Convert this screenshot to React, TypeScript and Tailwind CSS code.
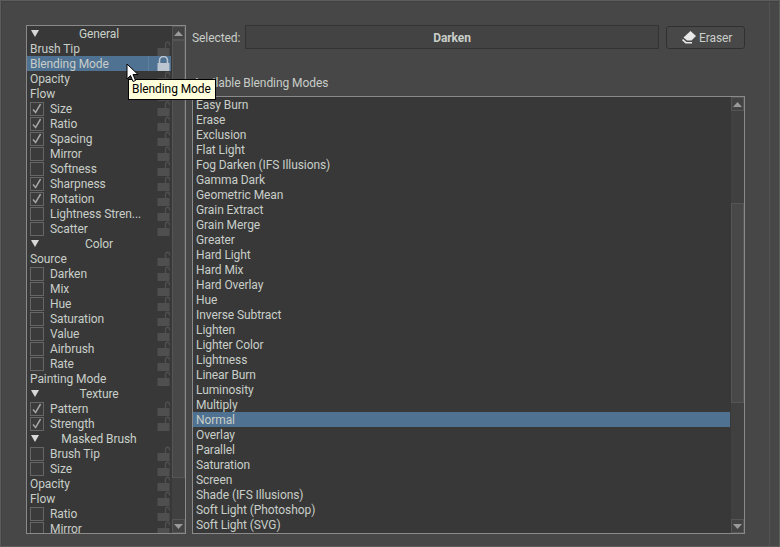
import React from "react";

const font = { fontFamily: 'Roboto, sans-serif' };

type Row =
  | { k: "h"; t: string }
  | { k: "p"; t: string; sel?: boolean }
  | { k: "c"; t: string; on?: boolean };

const rows: Row[] = [
  { k: "h", t: "General" },
  { k: "p", t: "Brush Tip" },
  { k: "p", t: "Blending Mode", sel: true },
  { k: "p", t: "Opacity" },
  { k: "p", t: "Flow" },
  { k: "c", t: "Size", on: true },
  { k: "c", t: "Ratio", on: true },
  { k: "c", t: "Spacing", on: true },
  { k: "c", t: "Mirror" },
  { k: "c", t: "Softness" },
  { k: "c", t: "Sharpness", on: true },
  { k: "c", t: "Rotation", on: true },
  { k: "c", t: "Lightness Stren..." },
  { k: "c", t: "Scatter" },
  { k: "h", t: "Color" },
  { k: "p", t: "Source" },
  { k: "c", t: "Darken" },
  { k: "c", t: "Mix" },
  { k: "c", t: "Hue" },
  { k: "c", t: "Saturation" },
  { k: "c", t: "Value" },
  { k: "c", t: "Airbrush" },
  { k: "c", t: "Rate" },
  { k: "p", t: "Painting Mode" },
  { k: "h", t: "Texture" },
  { k: "c", t: "Pattern", on: true },
  { k: "c", t: "Strength", on: true },
  { k: "h", t: "Masked Brush" },
  { k: "c", t: "Brush Tip" },
  { k: "c", t: "Size" },
  { k: "p", t: "Opacity" },
  { k: "p", t: "Flow" },
  { k: "c", t: "Ratio" },
  { k: "c", t: "Mirror" },
];

const modes = [
  "Easy Burn", "Erase", "Exclusion", "Flat Light", "Fog Darken (IFS Illusions)", "Gamma Dark",
  "Geometric Mean", "Grain Extract", "Grain Merge", "Greater", "Hard Light", "Hard Mix",
  "Hard Overlay", "Hue", "Inverse Subtract", "Lighten", "Lighter Color", "Lightness",
  "Linear Burn", "Luminosity", "Multiply", "Normal", "Overlay", "Parallel", "Saturation",
  "Screen", "Shade (IFS Illusions)", "Soft Light (Photoshop)", "Soft Light (SVG)",
];

function Lock({ bright }: { bright?: boolean }) {
  const c = bright ? "#bcc6d0" : "#4f4f4f";
  return (
    <svg width="13" height="15" viewBox="0 0 13 15" className="block shrink-0">
      <rect x="0.5" y="7" width="12" height="8" fill={c} />
      {bright ? (
        <path d="M2.5 7V4.5a4 4 0 0 1 8 0V7" fill="none" stroke={c} strokeWidth="1.6" />
      ) : (
        <path d="M8.5 7V3.5a3 3 0 0 1 3-2.5M11 1.2a2.5 2.5 0 0 1 1.3 3.3" fill="none" stroke={c} strokeWidth="1.4" />
      )}
    </svg>
  );
}

function Triangle({ up, color = "#9a9a9a" }: { up?: boolean; color?: string }) {
  return (
    <svg width="9" height="5" viewBox="0 0 9 5" className="block">
      <path d={up ? "M0 5L4.5 0L9 5Z" : "M0 0H9L4.5 5Z"} fill={color} />
    </svg>
  );
}

function Check({ on }: { on?: boolean }) {
  return (
    <span className="flex h-[14px] w-[14px] shrink-0 items-center justify-center border border-[#666666] bg-[#3b3b3b]">
      {on && (
        <svg width="10" height="11" viewBox="0 0 10 11">
          <path d="M1 6.5L3.6 9.5L8.6 1" fill="none" stroke="#a4a4a4" strokeWidth="1.5" />
        </svg>
      )}
    </span>
  );
}

function ScrollButton({ up }: { up?: boolean }) {
  return (
    <div className="flex h-[14px] w-[13px] shrink-0 items-center justify-center border border-[#555555] bg-[#434343]">
      <Triangle up={up} />
    </div>
  );
}

function Scrollbar({ before, thumb }: { before: string; thumb: string }) {
  return (
    <div className="flex w-[13px] shrink-0 flex-col self-stretch bg-[#404040]">
      <ScrollButton up />
      <div className={before} />
      <div className={`${thumb} border border-[#555555] bg-[#484848]`} />
      <div className="flex-1" />
      <ScrollButton />
    </div>
  );
}

function TreeRow({ row }: { row: Row }) {
  const sel = row.k === "p" && row.sel;
  return (
    <div className={`flex h-[15px] shrink-0 items-center ${sel ? "bg-[#4f7192]" : ""}`}>
      {row.k === "h" ? (
        <div className="flex w-full items-center pl-[4px] pr-[13px]">
          <svg width="9" height="7" viewBox="0 0 9 7" className="block shrink-0">
            <path d="M0 0H8L4 7Z" fill="#d8d8d8" />
          </svg>
          <span className="flex-1 whitespace-nowrap pt-[2px] text-center text-[#c9d1c9]">{row.t}</span>
        </div>
      ) : (
        <>
          <div className="flex min-w-0 flex-1 items-center gap-[6px] pl-[3px]">
            {row.k === "c" && <Check on={row.on} />}
            <span className="whitespace-nowrap pt-[2px] text-[#c8cec8]">{row.t}</span>
          </div>
          {sel && <div className="h-[15px] w-px bg-[#5f7f9d]" />}
          <div className="flex w-[22px] shrink-0 justify-end pr-[1px]">
            <Lock bright={sel} />
          </div>
        </>
      )}
    </div>
  );
}

export default function App() {
  return (
    <div className="h-[547px] w-[780px] overflow-hidden bg-[#5c5c5c] p-px text-[12px] leading-[15px] tracking-[-0.08px]" style={font}>
      <div className="flex h-full border-l border-t border-[#414141] bg-[#474747]">
        <div className="relative flex min-w-0 flex-1 gap-[6px] border-r border-[#535353] pl-[24px] pt-[23px]">
          {/* Left tree */}
          <div className="flex h-[509px] w-[160px] shrink-0 overflow-hidden border border-[#8a8a8a] bg-[#383838]">
            <div className="flex min-w-0 flex-1 flex-col overflow-hidden">
              {rows.map((r, i) => (
                <TreeRow key={i} row={r} />
              ))}
            </div>
            <div className="w-px bg-[#383838]" />
            <Scrollbar before="h-0" thumb="h-[438px]" />
          </div>

          {/* Right side */}
          <div className="flex w-[553px] shrink-0 flex-col">
            <div className="flex h-[24px] items-center">
              <span className="w-[53px] shrink-0 pt-[2px] text-[#c8cec8]">Selected:</span>
              <div className="flex h-[24px] w-[414px] shrink-0 items-center justify-center border border-[#333333] bg-[#434343] pt-[2px] font-bold text-[#c8cec8]">
                Darken
              </div>
              <button className="ml-[7px] flex h-[23px] w-[79px] shrink-0 items-center gap-[2px] rounded-[3px] border border-[#303030] bg-[#484848] pl-[15px] text-[#c8cec8]">
                <svg width="15" height="13" viewBox="0 0 15 13" className="block">
                  <path d="M8.5 0L14 5L9.5 9.5H5L1.5 6.5Z" fill="#e8e8e8" />
                  <path d="M1 8L4.5 11H10V12.5H3.5L0 9.2Z" fill="#e8e8e8" />
                </svg>
                <span className="pt-[2px]">Eraser</span>
              </button>
            </div>
            <div className="h-[47px] pl-px pt-[27px] text-[#c8cec8]">Available Blending Modes</div>
            <div className="flex h-[438px] overflow-hidden border border-[#8a8a8a] bg-[#383838]">
              <div className="flex min-w-0 flex-1 flex-col overflow-hidden">
                {modes.map((m) => (
                  <div
                    key={m}
                    className={`h-[15px] shrink-0 whitespace-nowrap pl-[3px] pt-px text-[#c8cec8] ${m === "Normal" ? "bg-[#4f7192]" : ""}`}
                  >
                    {m}
                  </div>
                ))}
              </div>
              <div className="w-px bg-[#383838]" />
              <Scrollbar before="h-[92px]" thumb="h-[200px]" />
            </div>
          </div>

          {/* Tooltip over content */}
          <div className="absolute left-[126px] top-[77px] h-[21px] whitespace-nowrap border border-black bg-[#ffffdc] pl-[3px] pr-[4px] py-[2px] text-black">
            Blending Mode
          </div>
          {/* Mouse pointer */}
          <svg width="13" height="20" viewBox="0 0 13 20" className="absolute left-[124px] top-[61px]">
            <path d="M1 1V16L4.5 12.5L7 18.5L9.5 17.5L7 11.5H12Z" fill="#ffffff" stroke="#000000" strokeWidth="1" />
          </svg>
        </div>
        <div className="w-[9px] shrink-0" />
      </div>
    </div>
  );
}
